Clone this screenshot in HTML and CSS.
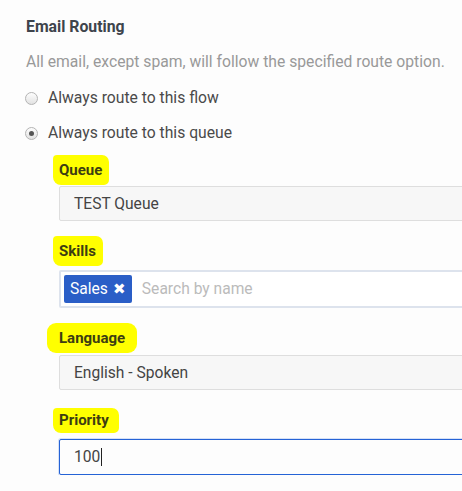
FILE: index.html
```html
<!DOCTYPE html>
<html>
<head>
<meta charset="utf-8">
<link rel="stylesheet" href="styles.css">
</head>
<body>
<div class="page">
  <h1 class="title">Email Routing</h1>
  <p class="desc">All email, except spam, will follow the specified route option.</p>
  <div class="radios">
    <label class="radio"><span class="dot"></span>Always route to this flow</label>
    <label class="radio"><span class="dot checked"></span>Always route to this queue</label>
  </div>
  <div class="fields">
    <div class="field f-queue">
      <div class="label"><span class="hl hl-queue">Queue</span></div>
      <div class="input">TEST Queue</div>
    </div>
    <div class="field f-skills">
      <div class="label"><span class="hl hl-skills">Skills</span></div>
      <div class="input tags">
        <span class="tag">Sales <span class="x">✖</span></span>
        <span class="placeholder">Search by name</span>
      </div>
    </div>
    <div class="field f-lang">
      <div class="label"><span class="hl hl-lang">Language</span></div>
      <div class="input">English - Spoken</div>
    </div>
    <div class="field f-prio">
      <div class="label"><span class="hl hl-prio">Priority</span></div>
      <div class="input focus">100<span class="caret"></span></div>
    </div>
  </div>
</div>
</body>
</html>
```
FILE: styles.css
```css
html, body {
  margin: 0;
  padding: 0;
  background: #fdfdfd;
  overflow: hidden;
}
body {
  font-family: Roboto, "Liberation Sans", sans-serif;
  color: #444;
}
.page {
  padding: 17px 0 0 26px;
}
.title {
  margin: 0;
  font-size: 15.8px;
  line-height: 20px;
  font-weight: 700;
  color: #3e444c;
}
.desc {
  margin: 15px 0 0;
  font-size: 15.7px;
  line-height: 20px;
  color: #999;
}
.radios {
  margin-top: 16px;
  display: flex;
  flex-direction: column;
  gap: 15px;
}
.radio {
  display: flex;
  align-items: center;
  font-size: 15.7px;
  line-height: 20px;
  color: #4a4a4a;
}
.dot {
  width: 11px;
  height: 11px;
  border-radius: 50%;
  border: 1px solid #b4b4b4;
  background: linear-gradient(#fdfdfd, #e2e2e2);
  margin: 0 10px 0 -1px;
  display: flex;
  align-items: center;
  justify-content: center;
  box-sizing: content-box;
}
.dot.checked::after {
  content: "";
  width: 5px;
  height: 5px;
  border-radius: 50%;
  background: #555;
}
.fields {
  padding-left: 33px;
  margin-top: 17px;
}
.field {
  display: flex;
  flex-direction: column;
}
.label {
  font-size: 15px;
  line-height: 20px;
  font-weight: 700;
  color: #3d3d12;
  margin-bottom: 7px;
}
.hl {
  display: inline-block;
  background: #ffff00;
  padding: 5px 7px 5px 6px;
  margin: -5px 0 -5px -6px;
  border-radius: 4px 7px 5px 8px;
}
.hl-lang {
  padding-left: 12px;
  padding-right: 12px;
  margin-left: -12px;
  border-radius: 9px;
}
.hl-prio {
  padding-top: 2px;
  padding-bottom: 3px;
  margin-top: -2px;
  margin-bottom: -3px;
  padding-right: 10px;
}
.input {
  box-sizing: border-box;
  width: 430px;
  height: 35px;
  border: 1px solid #dedede;
  background: #f7f7f7;
  border-radius: 2px 0 0 2px;
  padding: 0 14px;
  display: flex;
  align-items: center;
  font-size: 15.6px;
  color: #444;
}
.f-queue .label { margin-bottom: 6px; }
.f-skills { margin-top: 20px; }
.f-skills .label { margin-bottom: 9px; }
.f-lang { margin-top: 20px; }
.f-prio { margin-top: 20px; }
.f-prio .label { margin-bottom: 9px; }
.tags {
  height: 38px;
  border: 2px solid #dde3ed;
  background: #fff;
  padding: 0 0 0 3px;
  gap: 10px;
}
.tag {
  background: #2a5ec7;
  color: #fff;
  height: 28px;
  padding: 0 6px 0 6px;
  border-radius: 2px;
  display: flex;
  align-items: center;
  gap: 5px;
  font-size: 15.6px;
}
.x {
  font-size: 15px;
  line-height: 1;
}
.placeholder {
  color: #bbb;
}
.focus {
  height: 36px;
  background: #fdfdfd;
  border: 1px solid #2563d6;
  box-shadow: 0 0 0 1px rgba(37, 99, 214, 0.18);
}
.caret {
  display: inline-block;
  width: 0;
  height: 18px;
  border-left: 1px solid #222;
  margin-left: 1px;
}
```
